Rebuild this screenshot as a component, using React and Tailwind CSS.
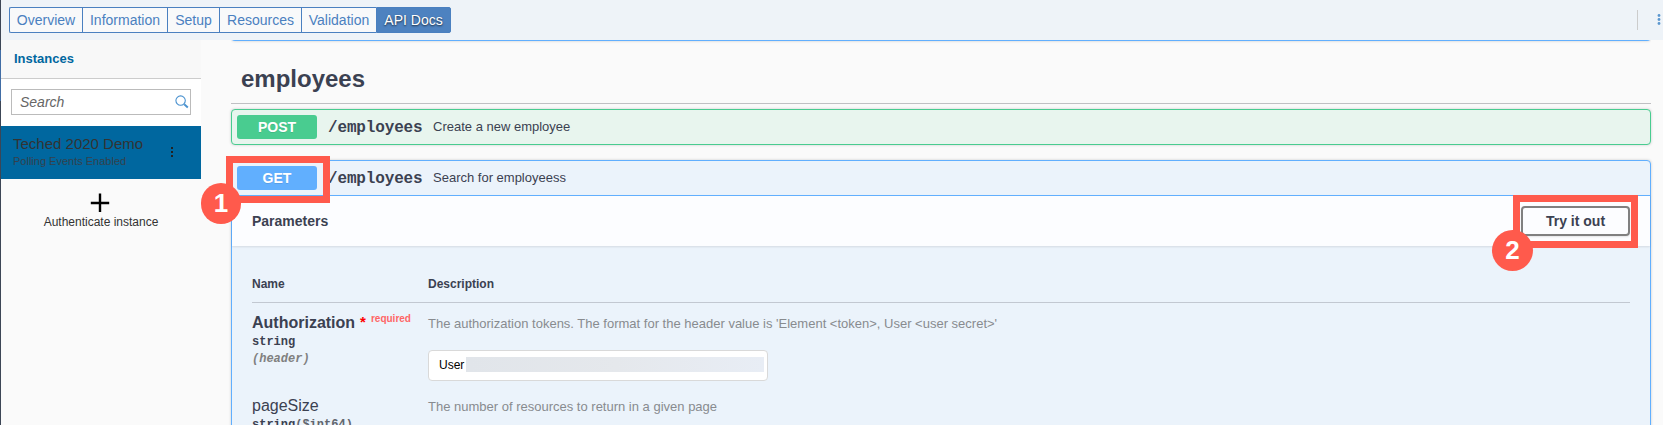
const tabs = [
  ['Overview', 'w-[73px]'],
  ['Information', 'w-[85px]'],
  ['Setup', 'w-[52px]'],
  ['Resources', 'w-[82px]'],
  ['Validation', 'w-[75px]'],
];

function TopBar() {
  return (
    <header className="flex h-10 shrink-0 items-start bg-[#eef3f8] pl-2 pt-[7px]">
      <nav className="flex h-[26px] text-[14px] leading-[24px] text-[#4a80c0]">
        {tabs.map(([label, width], i) => (
          <div
            key={label}
            className={`${width} border-y border-l border-[#4a80c0] bg-[#f8f9fa] text-center ${i === 0 ? 'rounded-l-[2px]' : ''}`}
          >
            {label}
          </div>
        ))}
        <div className="w-[75px] rounded-r-[2px] border border-[#4a80c0] bg-[#4d82c0] text-center text-white [text-shadow:0_1px_2px_rgba(0,0,0,0.7)]">
          API Docs
        </div>
      </nav>
      <div className="ml-auto mt-[3px] flex h-5 items-center">
        <div className="mr-[19px] h-5 w-px bg-[#ccc]" />
        <svg width="5" height="14" viewBox="0 0 5 14" className="mr-px" fill="#5b97cf">
          <circle cx="2" cy="2.5" r="1.4" />
          <circle cx="2" cy="6.5" r="1.4" />
          <circle cx="2" cy="10.5" r="1.4" />
        </svg>
      </div>
    </header>
  );
}

function Sidebar() {
  return (
    <aside className="w-[200px] shrink-0 text-[#333]">
      <div className="h-[39px] border-b border-[#ccc] bg-[#f8f8f8] pl-[13px] text-[13px] font-bold leading-[37px] text-[#0067a0]">
        Instances
      </div>
      <div className="h-[47px] bg-white px-[10px] pt-[10px]">
        <div className="flex h-[26px] items-center border border-[#bbb] bg-white pl-[8px] pr-px">
          <span className="flex-1 text-[14px] italic text-[#666]">Search</span>
          <svg width="14" height="14" viewBox="0 0 14 14" fill="none" stroke="#4b92cf">
            <circle cx="5.6" cy="5.6" r="4.7" strokeWidth="1.1" />
            <path d="M9.2 9.2 L12.8 12.5" strokeWidth="1.9" />
          </svg>
        </div>
      </div>
      <div className="flex h-[53px] items-start bg-[#00679f] pl-3">
        <div className="w-[155px] pt-[10px]">
          <div className="text-[15px] leading-[16px]">Teched 2020 Demo</div>
          <div className="text-[11px] leading-[18px] text-[#34414c]">Polling Events Enabled</div>
        </div>
        <svg width="8" height="14" viewBox="0 0 8 14" className="mt-[19px]" fill="#222">
          <rect x="3" y="2" width="2" height="2" />
          <rect x="3" y="6" width="2" height="2" />
          <rect x="3" y="10" width="2" height="2" />
        </svg>
      </div>
      <div className="flex flex-col items-center pt-[14px]">
        <svg width="20" height="20" viewBox="0 0 20 20" stroke="#000" strokeWidth="2.4" className="mr-[2px]">
          <path d="M10 .5V19M.8 10H19.2" />
        </svg>
        <div className="text-[12px] leading-[18px]">Authenticate instance</div>
      </div>
    </aside>
  );
}

function Method({ name, color }) {
  return (
    <div className={`${color} h-6 w-20 rounded-[3px] text-center text-[14px] font-bold leading-6 text-white [text-shadow:0_1px_0_rgba(0,0,0,0.1)]`}>
      {name}
    </div>
  );
}

function Summary({ name, color, text }) {
  return (
    <div className="flex h-[34px] items-center pl-[5px]">
      <Method name={name} color={color} />
      <span className="ml-[11px] w-[94px] whitespace-nowrap pt-px font-['Liberation_Mono',monospace] text-[16px] font-bold tracking-[-0.15px]">
        /employees
      </span>
      <span className="ml-[11px] text-[13px]">{text}</span>
    </div>
  );
}

function Callout({ number, className }) {
  return (
    <div className={`absolute flex items-center justify-center rounded-full bg-[#ff5a4c] text-[26px] font-bold text-white ${className}`}>
      {number}
    </div>
  );
}

function Operation() {
  return (
    <section className="mt-[15px] h-[300px] rounded-[4px] border border-[#61affe] bg-[#ebf3fb] shadow-[0_0_3px_rgba(0,0,0,0.19)]">
      <Summary name="GET" color="bg-[#61affe]" text="Search for employeess" />
      <div className="flex h-[51px] items-center justify-between border-t border-[#61affe] bg-[#fcfdff] pl-5 pr-[20px] shadow-[0_1px_2px_rgba(0,0,0,0.1)]">
        <h4 className="text-[14px] font-bold">Parameters</h4>
        <div className="h-[30px] w-[109px] rounded-[4px] border-2 border-[#808080] text-center text-[14px] font-bold leading-[26px] shadow-[0_1px_2px_rgba(0,0,0,0.1)]">
          Try it out
        </div>
      </div>
      <div className="px-5 pt-[31px]">
        <div className="flex h-[26px] border-b border-[#c2c8d1] text-[12px] font-bold leading-[15px]">
          <div className="w-[176px]">Name</div>
          <div>Description</div>
        </div>
        <div className="flex h-[83px]">
          <div className="w-[176px] pt-[11px]">
            <div className="flex text-[16px] font-bold leading-[18px]">
              Authorization
              <span className="ml-[5px] -mt-px text-[15px] leading-[18px] text-[#ff0000]">*</span>
              <span className="ml-[5px] -mt-[3px] text-[10px] leading-[16px] text-[#ff6666]">required</span>
            </div>
            <div className="mt-[3px] font-['Liberation_Mono',monospace] text-[12px] font-bold leading-[15px]">string</div>
            <div className="mt-[2px] font-['Liberation_Mono',monospace] text-[12px] font-bold italic leading-[14px] text-[#808080]">(header)</div>
          </div>
          <div>
            <div className="mt-[13px] text-[13px] leading-[15px] text-[#888b8f]">
              {"The authorization tokens. The format for the header value is 'Element <token>, User <user secret>'"}
            </div>
            <div className="mt-[19px] flex h-[31px] w-[340px] items-center rounded-[4px] border border-[#d9d9d9] bg-white pb-px pl-[10px] text-[12px] text-black">
              <span className="w-[27px]">User</span>
              <div className="mb-px h-[15px] w-[298px] bg-linear-to-r from-[#e1e5ea] via-[#e5e8ec] to-[#e8edf5]" />
            </div>
          </div>
        </div>
        <div className="flex">
          <div className="w-[176px] pt-[11px]">
            <div className="text-[16px] leading-[18px]">pageSize</div>
            <div className="mt-[3px] font-['Liberation_Mono',monospace] text-[12px] font-bold leading-[15px]">
              string<span className="text-[#62666e]">($int64)</span>
            </div>
          </div>
          <div className="mt-[13px] text-[13px] leading-[15px] text-[#888b8f]">
            The number of resources to return in a given page
          </div>
        </div>
      </div>
    </section>
  );
}

export default function App() {
  return (
    <div className="relative flex h-[425px] w-[1663px] overflow-hidden bg-[#fafafa] font-['Liberation_Sans',Arial,sans-serif]">
      <div className="w-px shrink-0 bg-[#3c4656] pt-[50px]">
        <div className="h-[51px] bg-[#416da5]" />
      </div>
      <div className="flex min-w-0 flex-1 flex-col">
        <TopBar />
        <div className="flex min-h-0 flex-1">
          <Sidebar />
          <main className="ml-[30px] w-[1420px] shrink-0 text-[#3b4151]">
            <div className="h-[5px] overflow-hidden">
              <div className="-mt-[9px] h-[10px] rounded-b-[4px] border-b border-[#61affe] shadow-[0_0_3px_rgba(0,0,0,0.19)]" />
            </div>
            <h3 className="h-[59px] border-b border-[#bfc0c3] pl-[10px] pt-[20px] text-[24px] font-bold leading-[28px]">
              employees
            </h3>
            <section className="mt-[5px] rounded-[4px] border border-[#49cc90] bg-[#e8f5ee] shadow-[0_0_3px_rgba(0,0,0,0.19)]">
              <Summary name="POST" color="bg-[#49cc90]" text="Create a new employee" />
            </section>
            <Operation />
          </main>
        </div>
      </div>
      <div className="absolute left-[226px] top-[156px] h-[47px] w-[104px] border-[7px] border-[#ff5a4c]" />
      <Callout number="1" className="left-[201px] top-[183px] h-[41px] w-[40px]" />
      <div className="absolute left-[1513px] top-[195px] h-[53px] w-[125px] border-[7px] border-[#ff5a4c]" />
      <Callout number="2" className="left-[1492px] top-[230px] size-[41px]" />
    </div>
  );
}
